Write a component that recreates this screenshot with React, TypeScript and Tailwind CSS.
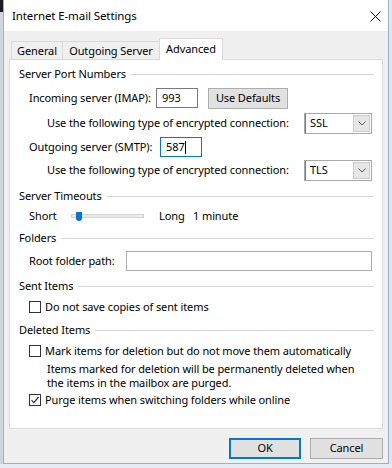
import React from 'react';

const font = "font-['Noto_Sans','Open_Sans',sans-serif] text-[11px] tracking-[-0.1px] text-black";

function Section({ title, className = '' }: { title: string; className?: string }) {
  return (
    <div className={`flex items-center h-[20px] ${className}`}>
      <span className="whitespace-nowrap">{title}</span>
      <div className="flex-1 h-px bg-[#d5d5d5] ml-[5px]" />
    </div>
  );
}

function Checkbox({ checked = false }: { checked?: boolean }) {
  return (
    <div className="w-[12px] h-[12px] border border-[#333333] bg-white flex items-center justify-center shrink-0">
      {checked && (
        <svg width="10" height="10" viewBox="0 0 10 10">
          <path d="M1.5 5.2 L3.8 7.6 L8.6 2" fill="none" stroke="#333333" strokeWidth="1.2" />
        </svg>
      )}
    </div>
  );
}

function Combo({ value }: { value: string }) {
  return (
    <div className="w-[68px] h-[21px] border border-[#a9a9a9] bg-white flex items-center">
      <div className="w-px h-full bg-[#7a7a7a]" />
      <span className="pl-[4px] flex-1">{value}</span>
      <div className="w-[17px] h-[17px] mr-[1px] bg-[#e6e6e6] border border-[#cccccc] flex items-center justify-center">
        <svg width="8" height="5" viewBox="0 0 8 5">
          <path d="M0.5 0.5 L4 4 L7.5 0.5" fill="none" stroke="#606060" strokeWidth="1" />
        </svg>
      </div>
    </div>
  );
}

function Button({ label, primary = false, className = '' }: { label: string; primary?: boolean; className?: string }) {
  return (
    <div
      className={`h-[21px] bg-[#e1e1e1] flex items-center justify-center ${
        primary ? 'border-2 border-[#0078d7]' : 'border border-[#adadad]'
      } ${className}`}
    >
      {label}
    </div>
  );
}

export default function App() {
  return (
    <div className={`w-[392px] h-[468px] flex flex-col bg-[#e6ecf2] overflow-hidden ${font}`}>
      <div className="flex h-[464px]">
        <div className="w-[3px] flex flex-col">
          <div className="h-[12px] bg-[#1c1c1c]" />
          <div className="flex-1 bg-[#cfd5dc]" />
        </div>

        <div className="w-[386px] border-x border-b border-[#8fb4dc] flex flex-col">
          <div className="h-[31px] bg-white flex items-center justify-between pl-[8px] pr-[7px]">
            <span className="text-[11.5px]">Internet E-mail Settings</span>
            <svg width="11" height="11" viewBox="0 0 11 11" className="mt-[1px]">
              <path d="M0.5 0.5 L10.5 10.5 M10.5 0.5 L0.5 10.5" stroke="#111111" strokeWidth="1" />
            </svg>
          </div>

          <div className="flex-1 bg-[#f0f0f0] px-[5px] pt-[7px] flex flex-col">
            <div className="flex items-end h-[21px] pl-[2px]">
              <div className="w-[51px] h-[18px] border-t border-l border-[#d9d9d9] bg-[#f0f0f0] flex items-center justify-center pt-[2px]">
                General
              </div>
              <div className="w-[97px] h-[18px] border-t border-l border-[#d9d9d9] bg-[#f0f0f0] flex items-center justify-center pt-[2px]">
                Outgoing Server
              </div>
              <div className="w-[64px] h-[22px] -mb-px relative z-10 border-t border-x border-[#d9d9d9] bg-white flex items-start justify-center pt-[2px]">
                Advanced
              </div>
            </div>

            <div className="h-[370px] bg-white border border-[#d9d9d9] pl-[9px] pr-[8px] pt-[4px] flex flex-col">
              <Section title="Server Port Numbers" />

              <div className="flex items-center h-[20px] mt-[4px] pl-[10px]">
                <span className="w-[127px]">Incoming server (IMAP):</span>
                <div className="w-[42px] h-[20px] border border-[#7a7a7a] flex items-center pl-[5px]">993</div>
                <Button label="Use Defaults" className="w-[80px] ml-[10px]" />
              </div>

              <div className="flex items-center h-[21px] mt-[5px] pl-[28px]">
                <span className="w-[257px]">Use the following type of encrypted connection:</span>
                <Combo value="SSL" />
              </div>

              <div className="flex items-center h-[20px] mt-[3px] pl-[10px]">
                <span className="w-[131px]">Outgoing server (SMTP):</span>
                <div className="w-[42px] h-[20px] border border-[#0078d7] flex items-center pl-[5px]">
                  587
                  <div className="w-px h-[13px] bg-black" />
                </div>
              </div>

              <div className="flex items-center h-[21px] mt-[3px] pl-[28px]">
                <span className="w-[257px]">Use the following type of encrypted connection:</span>
                <Combo value="TLS" />
              </div>

              <Section title="Server Timeouts" className="mt-[5px]" />

              <div className="flex items-center h-[20px] pl-[10px]">
                <span className="w-[42px]">Short</span>
                <div className="relative w-[73px] h-[4px] bg-[#e7eaea] border border-[#d6d6d6]">
                  <div className="absolute left-[4px] -top-[3px] w-[6px] h-[9px] bg-[#0078d7] rounded-b-[3px]" />
                </div>
                <span className="w-[34px] ml-[15px]">Long</span>
                <span>1 minute</span>
              </div>

              <Section title="Folders" className="mt-[2px]" />

              <div className="flex items-center h-[20px] mt-[3px] pl-[10px]">
                <span className="w-[97px]">Root folder path:</span>
                <div className="w-[246px] h-[20px] border border-[#abadb3]" />
              </div>

              <Section title="Sent Items" className="mt-[5px]" />

              <div className="flex items-center h-[20px] mt-px pl-[10px] gap-[4px]">
                <Checkbox />
                <span>Do not save copies of sent items</span>
              </div>

              <Section title="Deleted Items" className="mt-[3px]" />

              <div className="flex items-center h-[20px] mt-px pl-[10px] gap-[4px]">
                <Checkbox />
                <span>Mark items for deletion but do not move them automatically</span>
              </div>

              <div className="pl-[28px] mt-[1px] leading-[14px]">
                <div>Items marked for deletion will be permanently deleted when</div>
                <div>the items in the mailbox are purged.</div>
              </div>

              <div className="flex items-center h-[20px] pl-[10px] gap-[4px]">
                <Checkbox checked />
                <span>Purge items when switching folders while online</span>
              </div>
            </div>

            <div className="flex justify-end gap-[9px] mt-[9px]">
              <Button label="OK" primary className="w-[72px]" />
              <Button label="Cancel" className="w-[73px]" />
            </div>
          </div>
        </div>

        <div className="w-[3px] bg-[#dfe6ee]" />
      </div>
    </div>
  );
}
